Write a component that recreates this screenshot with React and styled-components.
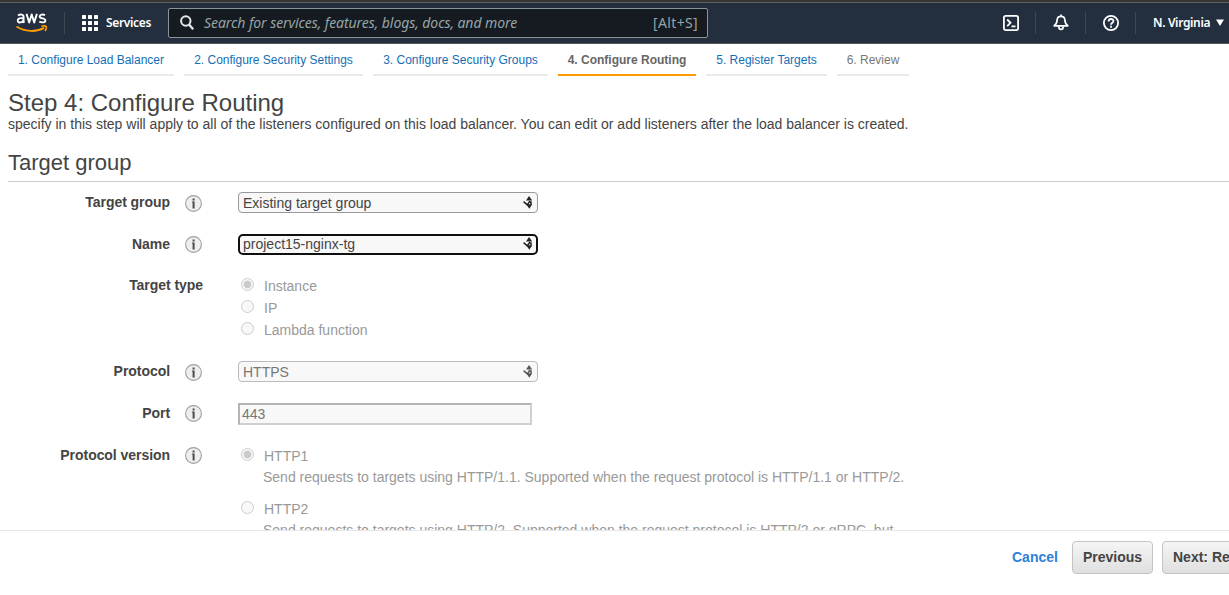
import React from 'react';
import styled, { createGlobalStyle } from 'styled-components';

const Global = createGlobalStyle`
  body {
    margin: 0;
    overflow: hidden;
    background: #fff;
    color: #444;
    font: 14px/20px "Liberation Sans", Arial, sans-serif;
  }
  * { box-sizing: border-box; }
`;

const Page = styled.div`
  width: 100%;
  height: 595px;
  display: flex;
  flex-direction: column;
  overflow: hidden;
`;

const TopBar = styled.header`
  flex: none;
  height: 44px;
  display: flex;
  align-items: center;
  padding-left: 16px;
  border-top: 2px solid #353535;
  border-bottom: 1px solid #53585f;
  background: #232f3e;
  box-shadow: inset 0 1px 0 #625e5e;
  font-family: "Noto Sans", "Open Sans", sans-serif;
  color: #fff;
`;

const Divider = styled.i`
  flex: none;
  width: 1px;
  height: 22px;
  margin-left: ${p => p.$left || 0}px;
  background: #414750;
`;

const Services = styled.div`
  display: flex;
  align-items: center;
  gap: 8px;
  width: 86px;
  margin-left: 17px;
  font-size: 12px;
  font-weight: 600;
  letter-spacing: -0.35px;
  white-space: nowrap;
`;

const Search = styled.div`
  display: flex;
  align-items: center;
  width: 540px;
  height: 30px;
  padding: 0 9px 0 11px;
  border: 1px solid #879596;
  border-radius: 2px;
  background: #161a21;
  color: #95a5a6;
  font-size: 14px;
`;

const Placeholder = styled.em`
  flex: 1;
  margin-left: 9px;
  letter-spacing: -0.07px;
  white-space: nowrap;
`;

const Shortcut = styled.span`
  letter-spacing: 0.35px;
`;

const Tools = styled.div`
  display: flex;
  align-items: center;
  margin-left: auto;
`;

const Tool = styled.div`
  width: 49px;
  display: flex;
  justify-content: center;
`;

const Region = styled.div`
  display: flex;
  align-items: center;
  gap: 6px;
  width: 93px;
  padding-left: 17px;
  font-size: 12px;
  font-weight: 600;
  letter-spacing: -0.35px;
  white-space: nowrap;
`;

const Tabs = styled.nav`
  flex: none;
  display: flex;
  gap: 10px;
  height: 32px;
  padding-left: 8px;
`;

const Tab = styled.span`
  width: ${p => p.$w}px;
  padding-top: 6px;
  text-align: center;
  white-space: nowrap;
  font-size: 12px;
  font-weight: ${p => (p.$state === 'active' ? 700 : 400)};
  color: ${p => ({ active: '#666', future: '#777' }[p.$state] || '#146eb4')};
  border-bottom: 2px solid ${p => (p.$state === 'active' ? '#ff9900' : '#eaeaea')};
`;

const Intro = styled.section`
  flex: none;
  height: 72px;
  padding: 13px 0 0 8px;
`;

const Title = styled.h1`
  margin: 0;
  font-size: 24px;
  line-height: 28px;
  font-weight: 400;
`;

const Description = styled.p`
  margin: -3px 0 0;
  white-space: nowrap;
`;

const SectionTitle = styled.h2`
  flex: none;
  height: 34px;
  margin: 0 0 0 8px;
  border-bottom: 1px solid #ccc;
  font-size: 22px;
  line-height: 30px;
  font-weight: 400;
`;

const Form = styled.main`
  flex: none;
  height: 348px;
  padding-top: 10px;
  overflow: hidden;
`;

const Row = styled.div`
  display: flex;
  height: ${p => p.$h}px;
`;

const Label = styled.div`
  display: flex;
  justify-content: flex-end;
  gap: 15px;
  width: 203px;
  margin-right: 35px;
  font-weight: 700;
  letter-spacing: -0.05px;
  white-space: nowrap;
`;

const Info = styled.svg`
  margin-top: ${p => p.$top}px;
  margin-right: 1px;
  width: 17px;
  height: 17px;
`;

const SelectBox = styled.div`
  display: flex;
  align-items: center;
  justify-content: space-between;
  width: 300px;
  height: 21px;
  padding: ${p => (p.$focus ? '0 3px 1px' : '0 4px')};
  border: ${p => (p.$focus ? '2px solid #101010' : `1px solid ${p.$disabled ? '#bbb' : '#999'}`)};
  border-radius: ${p => (p.$focus ? 5 : 4)}px;
  background: #f8f8f8;
  color: ${p => (p.$disabled ? '#777' : '#444')};
  line-height: ${p => (p.$focus ? 16 : 20)}px;
`;

const ArrowsSvg = styled.svg`
  margin-bottom: 1px;
`;

const Port = styled.div`
  width: 294px;
  height: 22px;
  padding-left: 2px;
  border: 2px solid;
  border-color: #b4b4b4 #cfcfcf #cfcfcf #b4b4b4;
  background: #f8f8f8;
  color: #777;
  line-height: 19px;
`;

const Options = styled.div`
  padding: 1px 0 0 3px;
  color: #999;
  white-space: nowrap;
`;

const Option = styled.div`
  display: flex;
  gap: 10px;
  height: 22px;
  line-height: 21px;
`;

const Radio = styled.span`
  width: 13px;
  height: 13px;
  margin-top: 2px;
  border: 1px solid #ccc;
  border-radius: 50%;
  background: ${p => (p.$on ? 'radial-gradient(circle, #cbcbcb 3.5px, #f8f8f8 4.3px)' : '#f8f8f8')};
`;

const Hint = styled.p`
  margin: -1px 0 12px 22px;
  line-height: 20px;
`;

const Footer = styled.footer`
  flex: none;
  height: 65px;
  display: flex;
  align-items: flex-start;
  padding: 10px 0 0 1012px;
  border-top: 1px solid #e6e6e6;
  font-weight: 700;
  white-space: nowrap;
`;

const Cancel = styled.a`
  flex: none;
  width: 60px;
  color: #2f80d8;
  line-height: 32px;
`;

const Button = styled.button`
  flex: none;
  width: ${p => p.$w}px;
  height: 33px;
  margin-right: 9px;
  padding: 0 10px 1px;
  border: 1px solid #c4c4c4;
  border-radius: 4px;
  background: linear-gradient(#f5f5f5, #dfdfdf);
  color: #444;
  font: 700 14px/28px "Liberation Sans", Arial, sans-serif;
  text-align: left;
`;

const Logo = () => (
  <svg width="32" height="23" viewBox="0 0 32 23" fill="none">
    <g stroke="#fff" strokeWidth="1.9" strokeLinejoin="round">
      <path d="M2 4.600c2.300-1.700 5.600-1.300 5.600 1.400v4.100c0 .8.200 1.300.7 1.800M7.600 7.500C4.500 6.700 1.700 7.100 1.700 9.500c0 3 5.200 2.300 5.900-.5" />
      <path d="M10.500 2.900l2.700 8.600 2.500-8 2.500 8 2.700-8.600" />
      <path d="M29 4.100c-2-1-5.300-.7-5.300 1.300 0 2.600 5.700 1.300 5.700 4 0 2.400-3.800 2.400-6.100 1.300" />
    </g>
    <path d="M.5 15.500c8 5.400 20 5.800 27.500 1.400" stroke="#f90" strokeWidth="2" />
    <path d="M25.500 15.200c5-1 6.200.2 3.600 5" stroke="#f90" strokeWidth="1.600" />
  </svg>
);

const Grid = () => (
  <svg width="16" height="16" viewBox="0 0 16 16" fill="#fff">
    {[0, 6, 12].map(y => [0, 6, 12].map(x => <rect key={`${x}-${y}`} x={x} y={y} width="4" height="4" rx=".5" />))}
  </svg>
);

const SearchIcon = () => (
  <svg width="15" height="15" viewBox="0 0 15 15" fill="none" stroke="#e4e8e8" strokeWidth="2">
    <circle cx="5.800" cy="6" r="4.700" />
    <path d="M9 9.500l4.200 4.700" strokeWidth="2.400" />
  </svg>
);

const Terminal = () => (
  <svg width="16" height="16" viewBox="0 0 16 16" fill="none" stroke="#fff" strokeWidth="1.800">
    <rect x=".9" y=".9" width="14.200" height="14.200" rx="1.800" />
    <path d="M4.200 4.500l3.300 3.300-3.300 3.300M8.500 11.300h4" />
  </svg>
);

const Bell = () => (
  <svg width="16" height="17" viewBox="0 0 16 17" fill="none" stroke="#fff" strokeWidth="1.700" strokeLinejoin="round">
    <path d="M8 .5v2M1.200 11.800c2.300-1.700 2.800-3.300 2.900-5.800C4.300 3.600 5.800 2.400 8 2.400s3.700 1.200 3.900 3.600c.1 2.500.6 4.100 2.900 5.800z" />
    <path d="M5.800 12.500c0 4 4.400 4 4.400 0" />
  </svg>
);

const Help = () => (
  <svg width="16" height="16" viewBox="0 0 16 16" fill="none" stroke="#fff" strokeWidth="1.800">
    <circle cx="8" cy="8" r="7.100" />
    <path d="M5.600 6.500c0-3.300 4.900-3.200 4.900-.4C10.500 7.800 8 7.700 8 9.700M8 10.800v1.900" />
  </svg>
);

const InfoIcon = ({ top }) => (
  <Info $top={top} viewBox="0 0 17 17">
    <circle cx="8.500" cy="8.500" r="7.900" fill="#eee" stroke="#a0a0a0" strokeWidth="1.100" />
    <path d="M7.600 3.600h2v1.800h-2zM6.900 6.500h2.700V13.500h-2V7.400h-.7z" fill="#4a4a4a" />
  </Info>
);

const Arrows = ({ dim }) => (
  <ArrowsSvg width="10" height="13" viewBox="0 0 10 13" fill={dim ? '#555' : '#222'}>
    <path d="M6 0l3.200 4.600H3zM3.300 8.200h6L6.300 12.800z" />
    <path d="M.6 5.600l3.700 3.300 2.200-3.200 1.500.4v2.500" fill="none" stroke={dim ? '#555' : '#222'} strokeWidth="1.500" />
  </ArrowsSvg>
);

const Field = ({ h, label, info = 3, children }) => (
  <Row $h={h}>
    <Label>{label}{info > 0 && <InfoIcon top={info} />}</Label>
    {children}
  </Row>
);

const Select = ({ value, focus, disabled }) => (
  <SelectBox $focus={focus} $disabled={disabled}>{value}<Arrows dim={disabled} /></SelectBox>
);

const tabs = [
  ['1. Configure Load Balancer', 166],
  ['2. Configure Security Settings', 179],
  ['3. Configure Security Groups', 175],
  ['4. Configure Routing', 138, 'active'],
  ['5. Register Targets', 121],
  ['6. Review', 72, 'future'],
];

export default function App() {
  return (
    <Page>
      <Global />
      <TopBar>
        <Logo />
        <Divider $left={16} />
        <Services><Grid />Services</Services>
        <Search>
          <SearchIcon />
          <Placeholder>Search for services, features, blogs, docs, and more</Placeholder>
          <Shortcut>[Alt+S]</Shortcut>
        </Search>
        <Tools>
          <Tool><Terminal /></Tool><Divider />
          <Tool><Bell /></Tool><Divider />
          <Tool><Help /></Tool><Divider />
          <Region>
            N. Virginia
            <svg width="8" height="7" viewBox="0 0 8 7"><path d="M0 .5h8L4 7z" fill="#fff" /></svg>
          </Region>
        </Tools>
      </TopBar>
      <Tabs>
        {tabs.map(([text, w, state]) => <Tab key={text} $w={w} $state={state}>{text}</Tab>)}
      </Tabs>
      <Intro>
        <Title>Step 4: Configure Routing</Title>
        <Description>specify in this step will apply to all of the listeners configured on this load balancer. You can edit or add listeners after the load balancer is created.</Description>
      </Intro>
      <SectionTitle>Target group</SectionTitle>
      <Form>
        <Field h={42} label="Target group"><Select value="Existing target group" /></Field>
        <Field h={41} label="Name" info={2}><Select value="project15-nginx-tg" focus /></Field>
        <Field h={86} label="Target type" info={0}>
          <Options>
            <Option><Radio $on />Instance</Option>
            <Option><Radio />IP</Option>
            <Option><Radio />Lambda function</Option>
          </Options>
        </Field>
        <Field h={42} label="Protocol"><Select value="HTTPS" disabled /></Field>
        <Field h={42} label="Port" info={2}><Port>443</Port></Field>
        <Field h={120} label="Protocol version" info={2}>
          <Options>
            <Option><Radio $on />HTTP1</Option>
            <Hint>Send requests to targets using HTTP/1.1. Supported when the request protocol is HTTP/1.1 or HTTP/2.</Hint>
            <Option><Radio />HTTP2</Option>
            <Hint>Send requests to targets using HTTP/2. Supported when the request protocol is HTTP/2 or gRPC, but</Hint>
          </Options>
        </Field>
      </Form>
      <Footer>
        <Cancel>Cancel</Cancel>
        <Button $w={81}>Previous</Button>
        <Button $w={200}>Next: Register Targets</Button>
      </Footer>
    </Page>
  );
}
